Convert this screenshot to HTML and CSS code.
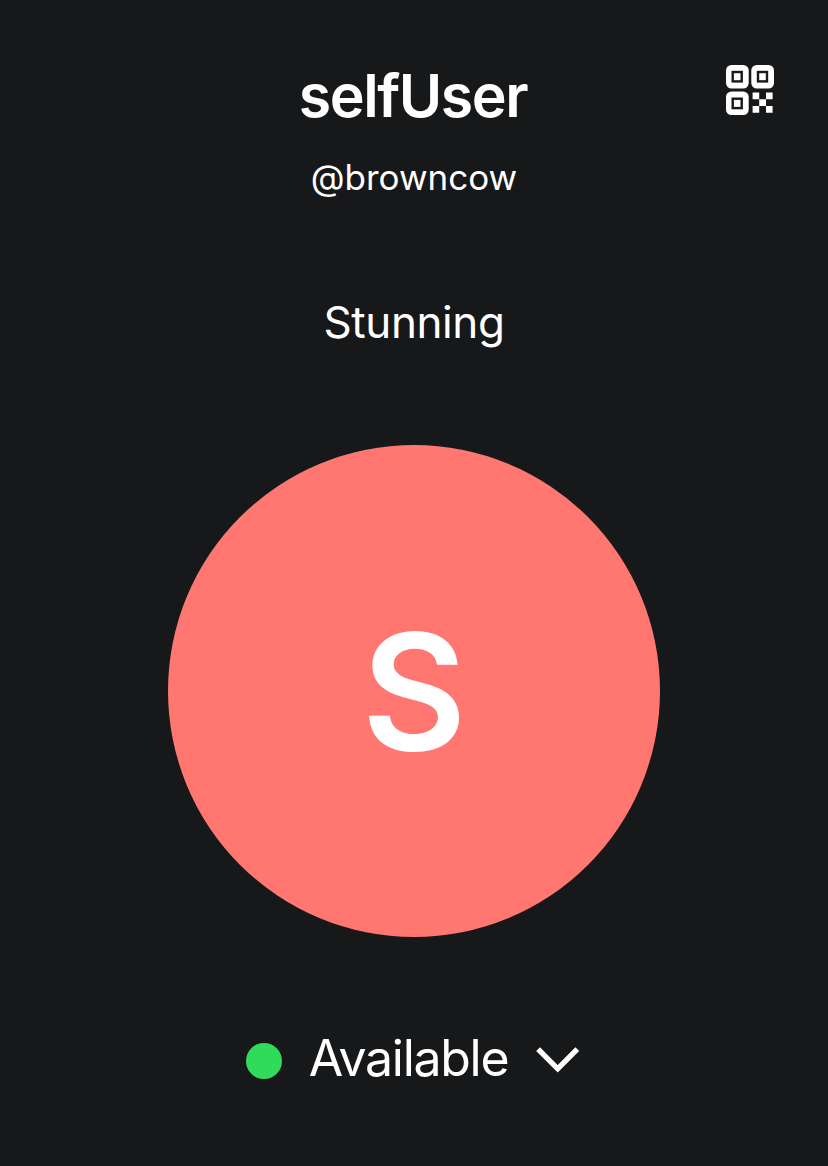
FILE: index.html
```html
<!DOCTYPE html>
<html lang="en">
<head>
<meta charset="utf-8">
<title>Profile</title>
<link rel="stylesheet" href="styles.css">
</head>
<body>
<main class="profile">
  <h1 class="name">selfUser</h1>
  <p class="handle">@browncow</p>
  <p class="team">Stunning</p>
  <div class="avatar"><span class="initial">S</span></div>
  <button class="status">
    <span class="dot"></span>
    <span class="label">Available</span>
    <svg class="chevron" width="44" height="28" viewBox="0 0 44 28"><path d="M2.100 3.200L21.700 22.800L41.300 3.200" fill="none" stroke="#fff" stroke-width="5.400"/></svg>
  </button>
  <button class="qr" aria-label="QR code">
    <svg width="50" height="52" viewBox="725 64 50 52" fill="#fff">
      <rect x="726" y="65" width="22.700" height="23.500" rx="5.500"/>
      <rect x="751.300" y="65" width="22.700" height="23.500" rx="5.500"/>
      <rect x="726" y="91.500" width="22.700" height="23.500" rx="5.500"/>
      <g fill="none" stroke="#17181a" stroke-width="2.400"><rect x="732.700" y="72" width="9" height="9.400"/><rect x="758" y="72" width="9" height="9.400"/><rect x="732.700" y="98.700" width="9" height="9.400"/></g>
      <path d="M752.600 92.400h6.600v6.800h-6.600zM766 92.400h6.600v6.800H766zM759.200 99.200h6.800v6.800h-6.800zM752.600 106h6.600v6.800h-6.600zM766 106h6.600v6.800H766z"/>
    </svg>
  </button>
</main>
</body>
</html>
```
FILE: styles.css
```css
body { margin: 0; background: #17181a; }
.profile {
  position: relative;
  box-sizing: border-box;
  height: 1166px;
  padding-top: 60px;
  display: flex;
  flex-direction: column;
  align-items: center;
  color: #fff;
  background: #17181a;
  font-family: Inter, sans-serif;
}
.name { margin: 0 2px 0 0; font-size: 59px; line-height: 72px; font-weight: 600; letter-spacing: -1.4px; }
.handle { margin: 24px 0 0; font-size: 35px; line-height: 42px; }
.team { margin: 97px 0 0; font-size: 44px; line-height: 54px; letter-spacing: -0.4px; }
.avatar {
  display: flex;
  align-items: center;
  justify-content: center;
  width: 492px;
  height: 492px;
  margin-top: 96px;
  border-radius: 50%;
  background: #ff7770;
}
.initial { padding-top: 2px; font-size: 161px; line-height: 196px; font-weight: 600; }
button { padding: 0; border: 0; background: none; color: inherit; font: inherit; }
.status { display: flex; align-items: center; margin: 89px 2px 0 0; height: 64px; }
.dot { width: 36px; height: 36px; margin-top: 6px; border-radius: 50%; background: #30db5b; }
.label { margin: 0 28px 0 27px; font-size: 50px; line-height: 60px; letter-spacing: -1.3px; }
.chevron { margin-top: 4px; }
.qr { position: absolute; left: 725px; top: 64px; width: 50px; height: 52px; }
.qr svg { display: block; }
```
